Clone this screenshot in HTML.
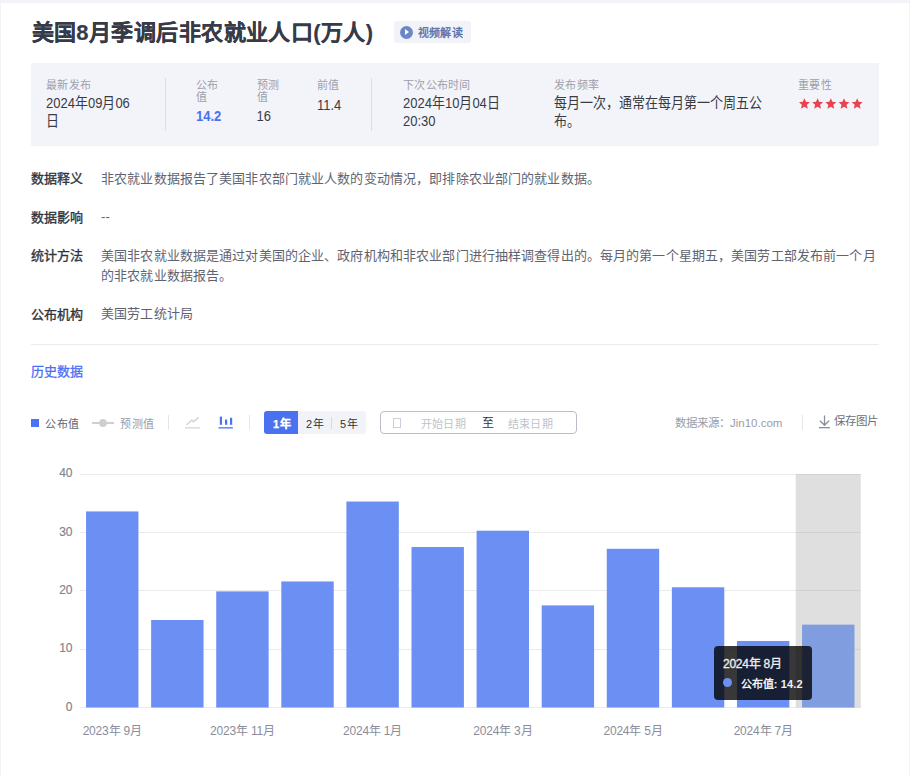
<!DOCTYPE html>
<html lang="zh-CN"><head><meta charset="utf-8">
<style>
*{margin:0;padding:0;box-sizing:border-box}
html,body{width:910px;height:777px;overflow:hidden;background:#f2f3f7;font-family:"Liberation Sans",sans-serif;color:#333}
.card{position:absolute;left:1px;top:3px;width:908px;height:800px;background:#fff}
.a{position:absolute;white-space:nowrap}
.title{left:31.5px;top:21px;font-size:22px;letter-spacing:0.42px;line-height:23px;font-weight:700;color:#373a47;-webkit-text-stroke:0.15px #373a47}
.vbtn{position:absolute;left:394px;top:21px;width:77px;height:22px;background:#f1f3f8;border-radius:3px}
.vbtn .ic{position:absolute;left:6px;top:4.5px;width:13px;height:13px;border-radius:50%;background:#6e86c8}
.vbtn .ic:after{content:"";position:absolute;left:5px;top:3.5px;border-left:4.5px solid #fff;border-top:3px solid transparent;border-bottom:3px solid transparent}
.vbtn .tx{position:absolute;left:24px;top:5.5px;font-size:11px;line-height:12px;font-weight:400;letter-spacing:0.2px;color:#5a6ea8;-webkit-text-stroke:0.35px #5a6ea8}
.info{position:absolute;left:31px;top:63px;width:848px;height:83px;background:#f3f4f9}
.lab{font-size:11px;line-height:12px;letter-spacing:0.3px;color:#9c9fab}
.val{font-size:13px;line-height:15.2px;color:#383b44;transform:scaleY(1.18);transform-origin:0 0}
.vdiv{position:absolute;width:1px;background:#dddee4;top:78px;height:53px}
.dl{left:31px;font-size:13px;line-height:13px;font-weight:400;color:#30333d;-webkit-text-stroke:0.35px #30333d}
.dv{left:101px;font-size:13px;line-height:20px;letter-spacing:0.13px;color:#5f6371}
.sep{position:absolute;left:31px;top:344px;width:848px;height:1px;background:#ebebeb}
.hist{left:31px;top:365px;font-size:13px;line-height:13px;color:#4a70f5;-webkit-text-stroke:0.3px #4a70f5}
.tb{font-size:12px;line-height:12px}
.tdiv{position:absolute;width:1px;background:#e6e6e6;top:415px;height:15px}
.yl{position:absolute;left:30.5px;width:42px;text-align:right;font-size:12px;line-height:14px;color:#80838f;-webkit-text-stroke:0.15px #80838f}
.xl{position:absolute;top:724.5px;width:100px;text-align:center;font-size:12px;line-height:13px;letter-spacing:-0.2px;color:#8a8d99}
</style></head><body>
<div class="card"></div>
<div class="a title">美国8月季调后非农就业人口(万人)</div>
<div class="vbtn"><div class="ic"></div><div class="tx">视频解读</div></div>

<div class="info"></div>
<div class="a lab" style="left:46px;top:79px">最新发布</div>
<div class="a val" style="left:46px;top:93.5px;white-space:normal;width:90px">2024年09月06日</div>
<div class="vdiv" style="left:165px"></div>
<div class="a lab" style="left:196px;top:79px;white-space:normal;width:30px">公布值</div>
<div class="a val" style="left:196px;top:106.5px;font-weight:700;color:#4a72f0">14.2</div>
<div class="a lab" style="left:256.5px;top:79px;white-space:normal;width:30px">预测值</div>
<div class="a val" style="left:256.5px;top:106.5px">16</div>
<div class="a lab" style="left:317px;top:79px">前值</div>
<div class="a val" style="left:317px;top:95.5px">11.4</div>
<div class="vdiv" style="left:371px"></div>
<div class="a lab" style="left:403px;top:79px">下次公布时间</div>
<div class="a val" style="left:403px;top:93.5px">2024年10月04日<br>20:30</div>
<div class="a lab" style="left:554px;top:79px">发布频率</div>
<div class="a val" style="left:554px;top:93.5px">每月一次，通常在每月第一个周五公<br>布。</div>
<div class="a lab" style="left:798px;top:79px">重要性</div>
<svg class="a" style="left:798px;top:97px" width="66" height="13" viewBox="0 0 66 13">
<defs><path id="st" d="M5.60 0.25 L7.16 3.86 L11.07 4.22 L8.12 6.82 L8.98 10.65 L5.60 8.65 L2.22 10.65 L3.08 6.82 L0.13 4.22 L4.04 3.86Z" fill="#e8434f"/></defs>
<use href="#st" x="0.8" y="1"/><use href="#st" x="14" y="1"/><use href="#st" x="27.2" y="1"/><use href="#st" x="40.4" y="1"/><use href="#st" x="53.6" y="1"/>
</svg>

<div class="a dl" style="top:172px">数据释义</div>
<div class="a dv" style="top:168.5px">非农就业数据报告了美国非农部门就业人数的变动情况，即排除农业部门的就业数据。</div>
<div class="a dl" style="top:210.5px">数据影响</div>
<div class="a dv" style="top:207px">--</div>
<div class="a dl" style="top:249px">统计方法</div>
<div class="a dv" style="top:245.5px">美国非农就业数据是通过对美国的企业、政府机构和非农业部门进行抽样调查得出的。每月的第一个星期五，美国劳工部发布前一个月<br>的非农就业数据报告。</div>
<div class="a dl" style="top:307.5px">公布机构</div>
<div class="a dv" style="top:304px">美国劳工统计局</div>
<div class="sep"></div>
<div class="a hist">历史数据</div>

<div class="a" style="left:31px;top:419px;width:8px;height:7.5px;background:#4a72f5"></div>
<div class="a tb" style="left:45px;top:417.8px;color:#62656f;font-size:11px;letter-spacing:0.5px">公布值</div>
<svg class="a" style="left:92px;top:418px" width="22" height="10"><rect x="0" y="4" width="22" height="2" fill="#cfcfcf"/><circle cx="11" cy="5" r="3.9" fill="#cfcfcf"/></svg>
<div class="a tb" style="left:120px;top:418px;color:#999cab;font-size:11px;letter-spacing:0.5px">预测值</div>
<div class="tdiv" style="left:168px"></div>
<svg class="a" style="left:184px;top:416px" width="18" height="14"><path d="M2.4 9 L7.9 4.2 L9.5 5.7 L14.7 1.3" stroke="#d6d6d6" stroke-width="1.6" fill="none"/><rect x="1" y="11.2" width="15" height="1.3" fill="#d6d6d6"/></svg>
<svg class="a" style="left:217px;top:416px" width="18" height="14"><rect x="2.8" y="0.6" width="2.2" height="8.2" fill="#4a72f5"/><rect x="8" y="3.5" width="2.2" height="5.3" fill="#4a72f5"/><rect x="13" y="1.8" width="2.2" height="7" fill="#4a72f5"/><rect x="1.5" y="11.2" width="14.4" height="1.3" fill="#4a72f5"/></svg>
<div class="tdiv" style="left:249px"></div>
<div class="a" style="left:264px;top:411px;width:102px;height:23px;background:#f2f3f8;border-radius:3px"></div>
<div class="a" style="left:264px;top:411px;width:34px;height:23px;background:#4a72f0;border-radius:3px 0 0 3px"></div>
<div class="a tb" style="left:273px;top:418px;color:#fff;font-weight:700;font-size:11px;letter-spacing:0.6px;-webkit-text-stroke:0.25px #fff">1年</div>
<div class="a tb" style="left:306px;top:418px;color:#333;font-size:11px;letter-spacing:0.6px">2年</div>
<div class="a" style="left:331px;top:416.5px;width:1px;height:12px;background:#d8d8d8"></div>
<div class="a tb" style="left:340px;top:418px;color:#333;font-size:11px;letter-spacing:0.6px">5年</div>
<div class="a" style="left:380px;top:411px;width:197px;height:23px;border:1px solid #b9bdc9;border-radius:4px"></div>
<div class="a" style="left:393px;top:418px;width:8px;height:10px;border:1px solid #c9cfe0"></div>
<div class="a tb" style="left:420.5px;top:417.5px;color:#c0c3cc;font-size:11px;letter-spacing:0.4px">开始日期</div>
<div class="a tb" style="left:482px;top:417px;color:#333">至</div>
<div class="a tb" style="left:507.5px;top:417.5px;color:#c0c3cc;font-size:11px;letter-spacing:0.4px">结束日期</div>
<div class="a tb" style="left:675px;top:417px;color:#9a9ca6;font-size:11.5px">数据来源：Jin10.com</div>
<div class="tdiv" style="left:802px"></div>
<svg class="a" style="left:818px;top:415px" width="13" height="14"><path d="M6.5 0.5 V10 M2 5.8 L6.5 10.3 L11 5.8" stroke="#8a8e9c" stroke-width="1.3" fill="none"/><rect x="1" y="12" width="11" height="1.3" fill="#8a8e9c"/></svg>
<div class="a tb" style="left:834px;top:415px;color:#6d7180;font-size:11.5px">保存图片</div>

<svg class="a" style="left:0;top:0" width="910" height="777">
<rect x="79.7" y="474" width="781.1" height="1" fill="#ebebeb"/>
<rect x="79.7" y="532" width="781.1" height="1" fill="#ebebeb"/>
<rect x="79.7" y="590" width="781.1" height="1" fill="#ebebeb"/>
<rect x="79.7" y="649" width="781.1" height="1" fill="#ebebeb"/>
<rect x="79.7" y="707" width="781.1" height="1" fill="#ebebeb"/>
<rect x="86.05" y="511.44" width="52.40" height="196.06" fill="#6b8ff2"/>
<rect x="151.14" y="619.98" width="52.40" height="87.52" fill="#6b8ff2"/>
<rect x="216.23" y="591.38" width="52.40" height="116.12" fill="#6b8ff2"/>
<rect x="281.32" y="581.46" width="52.40" height="126.04" fill="#6b8ff2"/>
<rect x="346.41" y="501.52" width="52.40" height="205.98" fill="#6b8ff2"/>
<rect x="411.50" y="547.04" width="52.40" height="160.46" fill="#6b8ff2"/>
<rect x="476.60" y="530.70" width="52.40" height="176.80" fill="#6b8ff2"/>
<rect x="541.69" y="605.39" width="52.40" height="102.11" fill="#6b8ff2"/>
<rect x="606.78" y="548.79" width="52.40" height="158.71" fill="#6b8ff2"/>
<rect x="671.87" y="587.30" width="52.40" height="120.20" fill="#6b8ff2"/>
<rect x="736.96" y="640.98" width="52.40" height="66.52" fill="#6b8ff2"/>
<rect x="795.71" y="474.1" width="65.09" height="233.4" fill="rgba(150,150,150,0.3)"/>
<rect x="802.05" y="624.64" width="52.40" height="82.86" fill="#7f9ddf"/>
</svg>
<div class="yl" style="top:699.5px">0</div>
<div class="yl" style="top:641.1px">10</div>
<div class="yl" style="top:582.8px">20</div>
<div class="yl" style="top:524.5px">30</div>
<div class="yl" style="top:466.1px">40</div>
<div class="xl" style="left:62.2px">2023年 9月</div>
<div class="xl" style="left:192.4px">2023年 11月</div>
<div class="xl" style="left:322.6px">2024年 1月</div>
<div class="xl" style="left:452.8px">2024年 3月</div>
<div class="xl" style="left:583.0px">2024年 5月</div>
<div class="xl" style="left:713.2px">2024年 7月</div>
<div class="a" style="left:714px;top:646px;width:98px;height:54px;background:rgba(0,0,0,0.78);border-radius:4px"></div>
<div class="a tb" style="left:723px;top:658px;color:#f0f0f0;font-weight:400;letter-spacing:-0.25px;-webkit-text-stroke:0.3px #f0f0f0">2024年 8月</div>
<div class="a" style="left:723px;top:678px;width:9px;height:9px;border-radius:50%;background:#6b8ff2"></div>
<div class="a tb" style="left:740.5px;top:677.5px;color:#f0f0f0;font-weight:700;font-size:11px;letter-spacing:0.12px">公布值: 14.2</div>
</body></html>
